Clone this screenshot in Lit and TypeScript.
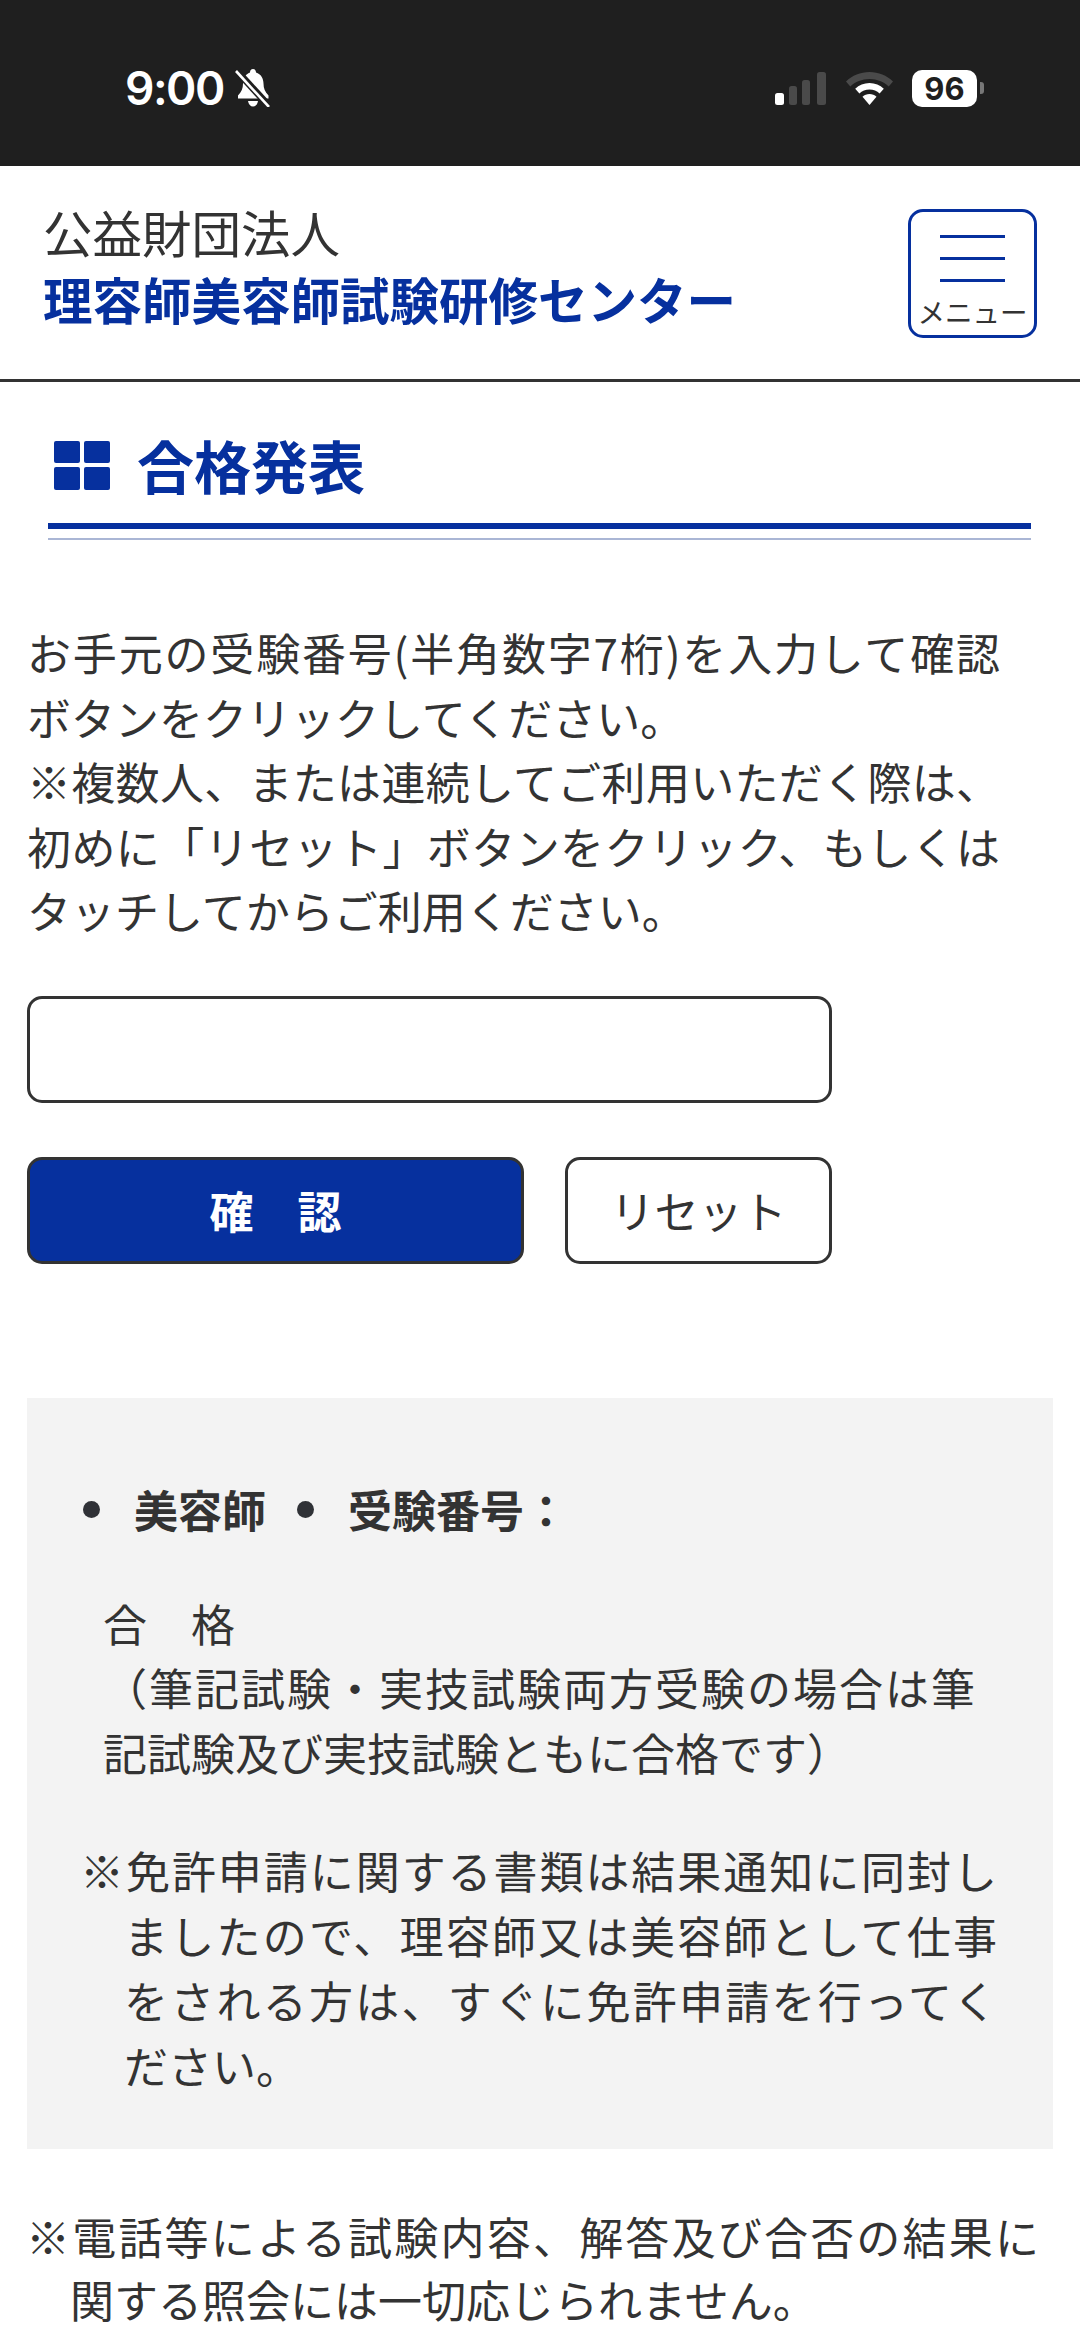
import { LitElement, html, css } from "lit";
import { customElement } from "lit/decorators.js";

@customElement("app-root")
export class AppRoot extends LitElement {
  static styles = css`
    :host {
      display: block;
      width: 1080px;
      background: #fff;
      color: #333;
      font-family: "Noto Sans CJK JP", "Noto Sans", sans-serif;
      font-size: 44px;
      line-height: 65px;
    }
    .status {
      height: 166px;
      box-sizing: border-box;
      background: #1f1f1f;
      display: flex;
      align-items: center;
      padding: 10px 96px 0 125px;
      color: #fff;
    }
    .time {
      font-family: Inter, sans-serif;
      font-weight: 600;
      font-size: 46px;
      line-height: 46px;
      letter-spacing: -1.500px;
    }
    .bell {
      margin-left: 11px;
      display: block;
    }
    .status-right {
      margin-left: auto;
      display: flex;
      align-items: center;
    }
    .status-right svg {
      display: block;
    }
    .wifi {
      margin: 0 19px 0 20px;
    }
    .battery {
      width: 65px;
      height: 37px;
      border-radius: 10px;
      background: #fff;
      color: #1f1f1f;
      font-family: Inter, sans-serif;
      font-weight: 700;
      font-size: 31px;
      line-height: 37px;
      text-align: center;
    }
    .nib {
      width: 4px;
      height: 12px;
      margin-left: 3px;
      border-radius: 0 3px 3px 0;
      background: #777;
    }
    .site-header {
      height: 216px;
      box-sizing: border-box;
      border-bottom: 3px solid #333;
      display: flex;
      align-items: center;
      justify-content: space-between;
      padding: 0 43px 0 43px;
    }
    .org {
      font-size: 49.500px;
      line-height: 67px;
      margin-top: -16px;
    }
    .org strong {
      display: block;
      color: #06309e;
      font-weight: 700;
    }
    .menu {
      width: 129px;
      height: 129px;
      box-sizing: border-box;
      border: 3px solid #06309e;
      border-radius: 15px;
      display: flex;
      flex-direction: column;
      align-items: center;
      padding-top: 23px;
      margin-top: 2px;
    }
    .menu i {
      display: block;
      width: 65px;
      height: 3px;
      background: #06309e;
      margin-bottom: 19px;
    }
    .menu span {
      font-size: 27.500px;
      line-height: 26px;
      margin-top: -3px;
      white-space: nowrap;
    }
    .heading {
      margin: 0 49px 0 48px;
      padding: 22px 0 0 6px;
      height: 147px;
      box-sizing: border-box;
      display: flex;
      align-items: center;
      gap: 27px;
      border-bottom: 6px solid #06309e;
      color: #06309e;
      font-size: 57px;
      line-height: 70px;
      font-weight: 700;
    }
    .heading-icon {
      width: 56px;
      height: 49px;
      display: grid;
      grid-template-columns: 1fr 1fr;
      grid-template-rows: 1fr 1fr;
      gap: 4px;
      flex: none;
      margin-top: 3px;
    }
    .heading-icon b {
      background: #06309e;
      border-radius: 2px;
    }
    .subrule {
      margin: 9px 49px 0 48px;
      height: 2px;
      background: #aab6d5;
    }
    /* wrapped lines in the original are justified, last lines are natural */
    .line {
      display: block;
      white-space: nowrap;
    }
    .line.fill {
      white-space: normal;
      text-align: justify;
      text-align-last: justify;
      text-justify: inter-character;
    }
    .intro {
      width: 973px;
      margin: 80px 0 0 27px;
      line-height: 64.600px;
    }
    .field {
      width: 805px;
      height: 107px;
      box-sizing: border-box;
      margin: 53px 0 0 27px;
      border: 3px solid #333;
      border-radius: 15px;
      background: #fff;
    }
    .actions {
      display: flex;
      gap: 41px;
      margin: 54px 0 0 27px;
    }
    .btn {
      height: 107px;
      box-sizing: border-box;
      border: 3px solid #333;
      border-radius: 15px;
      display: flex;
      align-items: center;
      justify-content: center;
    }
    .btn.primary {
      width: 497px;
      background: #06309e;
      color: #fff;
      font-weight: 700;
    }
    .btn.ghost {
      width: 267px;
      background: #fff;
    }
    .result {
      margin: 134px 27px 0;
      padding: 79px 0 51px 56px;
      background: #f3f3f3;
    }
    .labels {
      display: flex;
      font-weight: 700;
    }
    .labels span {
      display: flex;
      align-items: center;
    }
    .labels span + span {
      margin-left: 31px;
    }
    .labels span::before {
      content: "";
      flex: none;
      width: 17px;
      height: 17px;
      margin-right: 34px;
      border-radius: 50%;
      background: #2f3136;
    }
    .verdict {
      width: 872px;
      margin: 49px 0 0 20px;
      line-height: 64.500px;
    }
    .note {
      width: 917px;
      box-sizing: border-box;
      padding-left: 44px;
      margin: 54px 0 0 -3px;
    }
    .footnote {
      width: 1013px;
      box-sizing: border-box;
      padding-left: 44px;
      margin: 56px 0 0 26px;
      line-height: 63px;
    }
    .lead {
      margin-left: -44px;
    }
  `;

  private renderStatus() {
    return html`
      <div class="status">
        <span class="time">9:00</span>
        <svg class="bell" width="36" height="38" viewBox="0 0 36 38">
          <path
            fill="#fff"
            d="M18 0c2 0 3 1.500 3 3.500 5 1.500 7.500 6 7.500 11 0 5 1.500 8 5 12v3H3v-3c3.500-4 5-7 5-12 0-5 2.500-9.500 7-11C15 1.500 16 0 18 0zM13 32h10c-.5 3.500-2.500 5.500-5 5.500s-4.500-2-5-5.500z"
          />
          <path stroke="#1f1f1f" stroke-width="7" d="M1 1l33 36" />
          <path stroke="#fff" stroke-width="2.600" d="M1 2l33 36" />
        </svg>
        <div class="status-right">
          <svg width="51" height="33" viewBox="0 0 51 33">
            <rect x="0" y="21" width="9" height="12" rx="2.500" fill="#fff" />
            <rect x="14" y="14" width="8" height="19" rx="2.500" fill="#4a4a4a" />
            <rect x="27" y="8" width="8" height="25" rx="2.500" fill="#4a4a4a" />
            <rect x="42" y="0" width="9" height="33" rx="2.500" fill="#4a4a4a" />
          </svg>
          <svg class="wifi" width="47" height="33" viewBox="0 0 47 33">
            <path
              fill="#4a4a4a"
              d="M23.500 0C32.500 0 40.800 3.500 47 9.500l-4.300 5C37.700 9.800 31 7 23.500 7S9.300 9.800 4.300 14.500L0 9.500C6.200 3.500 14.500 0 23.500 0z"
            />
            <path
              fill="#fff"
              d="M23.500 11c5.500 0 10.500 2.100 14.300 5.700l-4.200 4.800c-2.600-2.500-6.200-4-10.100-4s-7.500 1.500-10.100 4l-4.200-4.800C13 13.100 18 11 23.500 11z"
            />
            <path
              fill="#fff"
              d="M23.500 22c2.700 0 5.100 1 7 2.700L23.500 33l-7-8.300c1.900-1.700 4.300-2.700 7-2.700z"
            />
          </svg>
          <div class="battery">96</div>
          <div class="nib"></div>
        </div>
      </div>
    `;
  }

  render() {
    return html`
      ${this.renderStatus()}
      <header class="site-header">
        <div class="org">
          公益財団法人
          <strong>理容師美容師試験研修センター</strong>
        </div>
        <div class="menu">
          <i></i><i></i><i></i>
          <span>メニュー</span>
        </div>
      </header>
      <h1 class="heading">
        <span class="heading-icon"><b></b><b></b><b></b><b></b></span>
        <span>合格発表</span>
      </h1>
      <div class="subrule"></div>
      <div class="intro">
        <span class="line fill">お手元の受験番号(半角数字7桁)を入力して確認</span>
        <span class="line">ボタンをクリックしてください。</span>
        <span class="line fill">※複数人、または連続してご利用いただく際は、</span>
        <span class="line fill">初めに「リセット」ボタンをクリック、もしくは</span>
        <span class="line">タッチしてからご利用ください。</span>
      </div>
      <div class="field"></div>
      <div class="actions">
        <div class="btn primary">確　認</div>
        <div class="btn ghost">リセット</div>
      </div>
      <section class="result">
        <div class="labels">
          <span>美容師</span>
          <span>受験番号：</span>
        </div>
        <div class="verdict">
          <span class="line">合　格</span>
          <span class="line fill">（筆記試験・実技試験両方受験の場合は筆</span>
          <span class="line">記試験及び実技試験ともに合格です）</span>
        </div>
        <div class="note">
          <span class="line fill lead">※免許申請に関する書類は結果通知に同封し</span>
          <span class="line fill">ましたので、理容師又は美容師として仕事</span>
          <span class="line fill">をされる方は、すぐに免許申請を行ってく</span>
          <span class="line">ださい。</span>
        </div>
      </section>
      <div class="footnote">
        <span class="line fill lead">※電話等による試験内容、解答及び合否の結果に</span>
        <span class="line">関する照会には一切応じられません。</span>
      </div>
    `;
  }
}
